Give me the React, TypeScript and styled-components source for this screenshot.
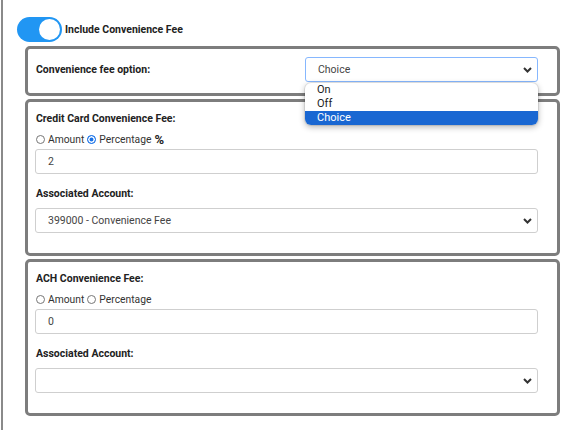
import React from "react";
import styled, { createGlobalStyle } from "styled-components";

const Global = createGlobalStyle`
  html, body { margin: 0; padding: 0; background: #fff; }
  body { font-family: Roboto, "Liberation Sans", Arial, sans-serif; color: #222; }
  * { box-sizing: border-box; }
`;

const Page = styled.div`
  margin-left: 1px;
  border-left: 2px solid #8a8a8a;
  min-height: 430px;
  padding: 17px 0 0 14px;
`;

const ToggleRow = styled.label`
  display: flex;
  align-items: center;
  gap: 3px;
  height: 25px;
  font-size: 10.5px;
  font-weight: 700;
  color: #222;
`;

const Track = styled.span`
  position: relative;
  display: inline-block;
  width: 45px;
  height: 25px;
  border-radius: 13px;
  background: #2196f3;
`;

const Knob = styled.span`
  position: absolute;
  top: 2px;
  right: 2px;
  width: 21px;
  height: 21px;
  border-radius: 50%;
  background: #fff;
`;

const Panels = styled.div`
  display: flex;
  flex-direction: column;
  gap: 3px;
  margin: 4px 0 0 8px;
  width: 535px;
`;

const Panel = styled.div`
  border: 3px solid #7d7d7d;
  border-radius: 5px;
  padding: 9px 19px 20px 7px;
  background: #fff;
`;

const OptionPanel = styled(Panel)`
  display: grid;
  grid-template-columns: 270px 1fr;
  align-items: center;
  padding: 8px 19px 11px 7px;
`;

const Label = styled.div<{ $top?: number }>`
  font-size: 10.5px;
  font-weight: 700;
  line-height: 16px;
  height: 16px;
  padding-left: 1px;
  color: #222;
  margin-top: ${(p) => p.$top ?? 0}px;
`;

const RadioRow = styled.div`
  display: flex;
  align-items: center;
  height: 18px;
  margin-top: 3px;
  font-size: 10.3px;
  color: #333;
  padding-left: 1px;
`;

const RadioOpt = styled.span`
  display: inline-flex;
  align-items: center;
  gap: 3px;
  margin-right: 3px;
`;

const Radio = styled.span<{ $on?: boolean }>`
  display: inline-block;
  width: 9px;
  height: 9px;
  border-radius: 50%;
  border: 1px solid ${(p) => (p.$on ? "#1a73e8" : "#767676")};
  background: ${(p) => (p.$on ? "#1a73e8" : "#fff")};
  box-shadow: ${(p) => (p.$on ? "inset 0 0 0 1.5px #fff" : "none")};
`;

const Pct = styled.span`
  font-weight: 700;
  font-size: 13px;
  color: #222;
`;

const Input = styled.div`
  height: 25px;
  margin-top: 1px;
  border: 1px solid #cfcfcf;
  border-radius: 3px;
  padding-left: 12px;
  display: flex;
  align-items: center;
  font-size: 10.5px;
  color: #444;
`;

const SelectWrap = styled.div<{ $top?: number }>`
  position: relative;
  margin-top: ${(p) => p.$top ?? 0}px;
`;

const SelectBox = styled.div<{ $focus?: boolean }>`
  height: 25px;
  border: 1px solid ${(p) => (p.$focus ? "#86b7fe" : "#cfcfcf")};
  border-radius: 3px;
  padding: 0 28px 0 12px;
  display: flex;
  align-items: center;
  font-size: 10.5px;
  color: #444;
  background: #fff;
`;

const Chevron = styled.svg`
  position: absolute;
  right: 6px;
  top: 50%;
  margin-top: -3px;
  width: 9px;
  height: 6px;
`;

const Menu = styled.ul`
  position: absolute;
  left: 0;
  right: 0;
  top: calc(100% + 1px);
  margin: 0;
  padding: 0;
  list-style: none;
  background: #fff;
  border-radius: 6px;
  overflow: hidden;
  box-shadow: 0 2px 6px rgba(0, 0, 0, 0.3), 0 0 0 1px rgba(0, 0, 0, 0.08);
  z-index: 5;
`;

const MenuItem = styled.li<{ $sel?: boolean }>`
  height: 14px;
  line-height: 14px;
  padding-left: 12px;
  font-size: 11px;
  color: ${(p) => (p.$sel ? "#fff" : "#222")};
  background: ${(p) => (p.$sel ? "#1967d2" : "transparent")};
`;

const ChevronIcon = () => (
  <Chevron viewBox="0 0 9 6">
    <polyline points="1,1 4.5,4.5 8,1" fill="none" stroke="#333" strokeWidth="2" />
  </Chevron>
);

const Select = ({
  value,
  focus,
  top,
  children,
}: {
  value: string;
  focus?: boolean;
  top?: number;
  children?: React.ReactNode;
}) => (
  <SelectWrap $top={top}>
    <SelectBox $focus={focus}>{value}</SelectBox>
    <ChevronIcon />
    {children}
  </SelectWrap>
);

const FeePanel = ({
  title,
  pct,
  value,
  account,
}: {
  title: string;
  pct: boolean;
  value: string;
  account: string;
}) => (
  <Panel>
    <Label>{title}</Label>
    <RadioRow>
      <RadioOpt>
        <Radio />
        Amount
      </RadioOpt>
      <RadioOpt>
        <Radio $on={pct} />
        Percentage
      </RadioOpt>
      {pct && <Pct>%</Pct>}
    </RadioRow>
    <Input>{value}</Input>
    <Label $top={12}>Associated Account:</Label>
    <Select value={account} top={6} />
  </Panel>
);

export default function App() {
  return (
    <>
      <Global />
      <Page>
        <ToggleRow>
          <Track>
            <Knob />
          </Track>
          Include Convenience Fee
        </ToggleRow>
        <Panels>
          <OptionPanel>
            <Label>Convenience fee option:</Label>
            <Select value="Choice" focus>
              <Menu>
                <MenuItem>On</MenuItem>
                <MenuItem>Off</MenuItem>
                <MenuItem $sel>Choice</MenuItem>
              </Menu>
            </Select>
          </OptionPanel>
          <FeePanel
            title="Credit Card Convenience Fee:"
            pct
            value="2"
            account="399000 - Convenience Fee"
          />
          <FeePanel title="ACH Convenience Fee:" pct={false} value="0" account="" />
        </Panels>
      </Page>
    </>
  );
}
